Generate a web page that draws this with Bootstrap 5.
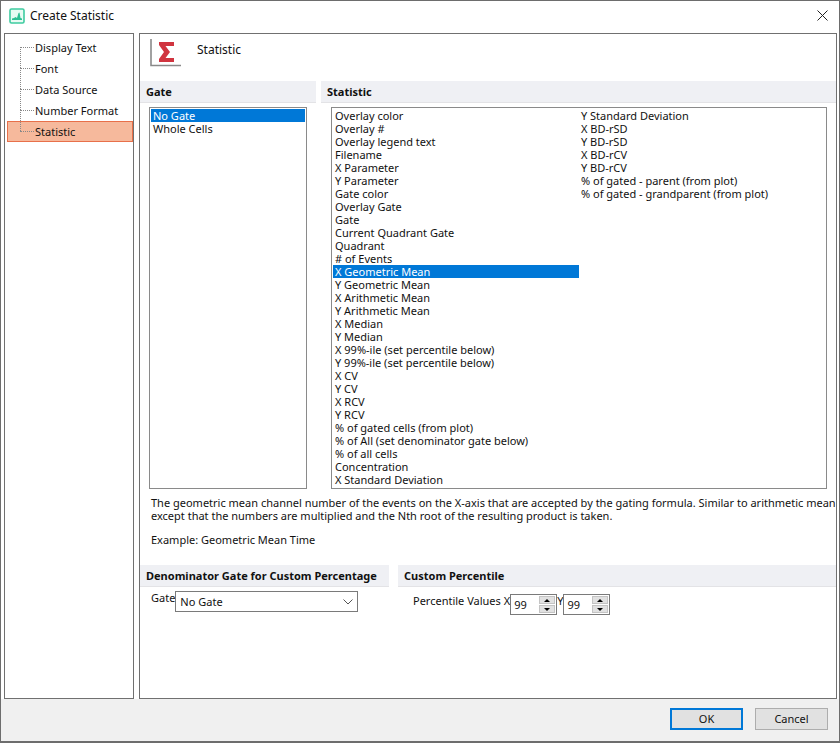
<!DOCTYPE html>
<html lang="en">
<head>
<meta charset="utf-8">
<title>Create Statistic</title>
<link href="https://cdn.jsdelivr.net/npm/bootstrap@5.3.0/dist/css/bootstrap.min.css" rel="stylesheet">
<style>
html,body{margin:0;height:743px;overflow:hidden;background:#fff}
body{font-family:"Noto Sans","Open Sans",sans-serif;font-size:11px;line-height:13px;color:#111}
.dlg{width:840px;height:743px;border:1px solid #6d6d6d;border-bottom-width:2px;background:#fff;display:flex;flex-direction:column}
.ttl{height:29px;flex:none;padding-left:8px}
.ttl span{font-size:12px;margin-left:5px}
.panes{height:669px;flex:none;padding:3px 4px 0 3px;gap:5px;background:#fff}
.navp{width:130px;border:1px solid #707070;padding-top:3px;flex:none}
.tnode{height:21px;line-height:21px;margin:0 0 0 2px;padding-left:28px;position:relative}
.tnode::before{content:"";position:absolute;left:13px;width:14px;top:10px;border-top:1px dotted #888}
.tnode::after{content:"";position:absolute;left:13px;top:-11px;height:21px;border-left:1px dotted #888}
.tnode.first::after{top:10px;height:11px}
.tnode.sel{background:#f6b99c;border:1px solid #e8704a;line-height:19px;padding-left:27px;width:126px}
.tnode.sel::before{left:12px;top:9px}.tnode.sel::after{left:12px;top:-12px}
.mainp{width:698px;border:1px solid #707070;flex:none;display:flex;flex-direction:column}
.hdr{height:47px;flex:none;padding:5px 0 0 10px;font-size:12px}
.hdr span{margin-left:15px;margin-top:4px}
.cap{background:#eff0f4;border-bottom:1px solid #e3e3e6;height:22px;line-height:21px;font-weight:700;padding-left:6px;font-size:11px}
.gatec{width:176px;flex:none}
.statc{width:515px;margin-left:5px;flex:none}
.lbox{border:1px solid #8a8a8a;height:382px;margin-top:4px;padding:1px}
.gatel{width:158px;margin-left:9px}
.statl{width:496px;margin-left:10px;display:flex;flex-direction:column;flex-wrap:wrap;align-content:flex-start}
.itm{height:13px;line-height:13px;padding-left:2px;white-space:nowrap;width:246px}
.gatel .itm{width:auto}
.itm.on{background:#0078d7;color:#fff}
.descr{margin:7px 0 0 11px;width:685px;height:69px}
.descr p{margin:0 0 11px}
.low{gap:9px}
.lowl{width:249px;flex:none}.lowr{width:438px;flex:none}
.lowb{height:30px}
.gsel{width:183px;height:21px;border:1px solid #7a7a7a;border-radius:0;padding:0 0 0 4px;font-size:11px;line-height:19px;color:#111;background-image:none;display:flex;justify-content:space-between;align-items:center}
.spin{width:47px;height:21px;border:1px solid #7a7a7a;display:flex;justify-content:space-between;padding:1px;line-height:17px}
.spin .val{padding-left:2px}
.arrs{width:16px;display:flex;flex-direction:column;gap:1px}
.arr{height:8px;background:#e1e1e1;border:1px solid #c4c4c4;display:flex;align-items:center;justify-content:center}
.ftr{flex:1;background:#f0f0f0;border-top:0;padding:9px 11px 0 0;gap:12px}
.wbtn{width:73px;height:22px;padding:0;font-size:11px;line-height:18px;border-radius:0;background:#e1e1e1;color:#111;border:1px solid #adadad}
.wbtn.prim{border:2px solid #0078d7}
</style>
</head>
<body>
<div class="dlg">
  <div class="ttl d-flex align-items-center">
    <svg width="16" height="16" viewBox="0 0 16 16"><rect x="1" y="1" width="14" height="14" rx="1.5" fill="#e8fbf3" stroke="#3ecba0" stroke-width="1.6"/><path d="M3 12V10.5L5 10 6.5 9 8 10 9.5 5 10.5 4.5 11.5 10 13 10.5V12Z" fill="#2fbf94"/></svg>
    <span>Create Statistic</span>
    <svg class="ms-auto" style="margin-right:11px" width="11" height="11" viewBox="0 0 11 11"><path d="M.5.5l10 10M10.5.5l-10 10" stroke="#222" fill="none"/></svg>
  </div>
  <div class="panes d-flex">
    <div class="navp">
      <div class="tnode first">Display Text</div>
      <div class="tnode">Font</div>
      <div class="tnode">Data Source</div>
      <div class="tnode">Number Format</div>
      <div class="tnode sel">Statistic</div>
    </div>
    <div class="mainp">
      <div class="hdr d-flex">
        <svg width="32" height="30" viewBox="0 0 32 30"><path d="M1 0V26.500H31" fill="none" stroke="#8a8a8a" stroke-width="1.600"/><path d="M9 3H24V7H15.500L20 13 15.500 19H24V23H9V20L14 13 9 6Z" fill="#d0343f"/></svg>
        <span>Statistic</span>
      </div>
      <div class="d-flex">
        <div class="gatec">
          <div class="cap">Gate</div>
          <div class="lbox gatel">
            <div class="itm on">No Gate</div>
            <div class="itm">Whole Cells</div>
          </div>
        </div>
        <div class="statc">
          <div class="cap">Statistic</div>
          <div class="lbox statl">
            <div class="itm">Overlay color</div><div class="itm">Overlay #</div><div class="itm">Overlay legend text</div><div class="itm">Filename</div><div class="itm">X Parameter</div><div class="itm">Y Parameter</div><div class="itm">Gate color</div><div class="itm">Overlay Gate</div><div class="itm">Gate</div><div class="itm">Current Quadrant Gate</div><div class="itm">Quadrant</div><div class="itm"># of Events</div><div class="itm on">X Geometric Mean</div><div class="itm">Y Geometric Mean</div><div class="itm">X Arithmetic Mean</div><div class="itm">Y Arithmetic Mean</div><div class="itm">X Median</div><div class="itm">Y Median</div><div class="itm">X 99%-ile (set percentile below)</div><div class="itm">Y 99%-ile (set percentile below)</div><div class="itm">X CV</div><div class="itm">Y CV</div><div class="itm">X RCV</div><div class="itm">Y RCV</div><div class="itm">% of gated cells (from plot)</div><div class="itm">% of All (set denominator gate below)</div><div class="itm">% of all cells</div><div class="itm">Concentration</div><div class="itm">X Standard Deviation</div><div class="itm">Y Standard Deviation</div><div class="itm">X BD-rSD</div><div class="itm">Y BD-rSD</div><div class="itm">X BD-rCV</div><div class="itm">Y BD-rCV</div><div class="itm">% of gated - parent (from plot)</div><div class="itm">% of gated - grandparent (from plot)</div>
          </div>
        </div>
      </div>
      <div class="descr">
        <p>The geometric mean channel number of the events on the X-axis that are accepted by the gating formula. Similar to arithmetic mean except that the numbers are multiplied and the Nth root of the resulting product is taken.</p>
        <p>Example: Geometric Mean Time</p>
      </div>
      <div class="d-flex low">
        <div class="lowl">
          <div class="cap">Denominator Gate for Custom Percentage</div>
          <div class="d-flex lowb align-items-start" style="padding:4px 0 0 11px">
            <span class="lblg">Gate</span>
            <div class="gsel">No Gate
              <svg class="me-1" width="10" height="6" viewBox="0 0 10 6"><path d="M.5.5L5 5 9.500.5" fill="none" stroke="#555"/></svg>
            </div>
          </div>
        </div>
        <div class="lowr">
          <div class="cap">Custom Percentile</div>
          <div class="d-flex lowb align-items-start" style="padding:7px 0 0 15px">
            <span>Percentile Values X</span>
            <div class="spin"><span class="val">99</span><div class="arrs"><div class="arr"><svg width="6" height="3"><path d="M3 0L6 3H0Z"/></svg></div><div class="arr"><svg width="6" height="3"><path d="M0 0H6L3 3Z"/></svg></div></div></div>
            <span class="ylab">Y</span>
            <div class="spin"><span class="val">99</span><div class="arrs"><div class="arr"><svg width="6" height="3"><path d="M3 0L6 3H0Z"/></svg></div><div class="arr"><svg width="6" height="3"><path d="M0 0H6L3 3Z"/></svg></div></div></div>
          </div>
        </div>
      </div>
    </div>
  </div>
  <div class="ftr d-flex justify-content-end align-items-start">
    <button class="btn wbtn prim" type="button">OK</button>
    <button class="btn wbtn" type="button">Cancel</button>
  </div>
</div>
</body>
</html>
